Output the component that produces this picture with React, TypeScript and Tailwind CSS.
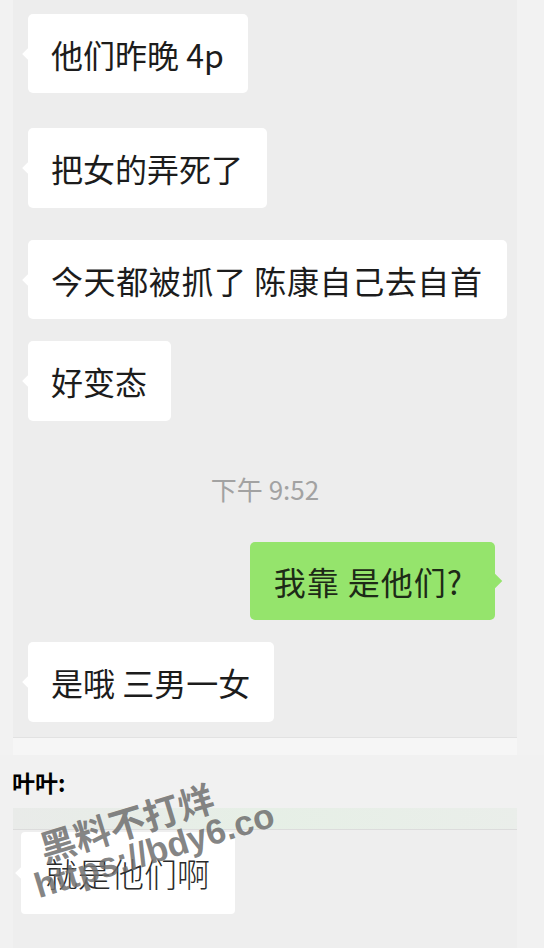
import React from 'react'

const cjk = { fontFamily: '"Noto Sans CJK SC", "Noto Sans", sans-serif' }

type BubbleProps = {
  text: string
  mt: string
  h?: string
  tr?: string
}

function LeftBubble({ text, mt, h = 'h-[79px]', tr = '' }: BubbleProps) {
  return (
    <div className={`flex pl-[15px] ${mt}`}>
      <div className={`relative flex items-center rounded-[5px] bg-white pl-[23px] pr-[24px] ${h}`}>
        {/* little tail */}
        <span className="absolute -left-[4px] top-1/2 h-[9px] w-[9px] -translate-y-1/2 rotate-45 bg-white" aria-hidden />
        <span className={`relative whitespace-pre text-[32px] leading-none text-[#1c1c1c] ${tr}`}>{text}</span>
      </div>
    </div>
  )
}

export default function App() {
  return (
    <div className="relative h-[948px] w-[544px] overflow-hidden bg-[#f2f2f2]" style={cjk}>
      {/* main chat column */}
      <div className="ml-[13px] w-[504px] bg-[#ededed] pt-[14px]">
        <LeftBubble text="他们昨晚 4p" mt="mt-0" />
        <LeftBubble text="把女的弄死了" mt="mt-[35px]" h="h-[80px]" />
        <LeftBubble text="今天都被抓了 陈康自己去自首" mt="mt-[32px]" tr="tracking-[0.6px]" />
        <LeftBubble text="好变态" mt="mt-[22px]" h="h-[80px]" />

        <div className="mt-[51px] flex h-[32px] items-center justify-center text-[26px] text-[#a2a2a2]">
          下午 9:52
        </div>

        {/* my message */}
        <div className="mt-[38px] flex justify-end pr-[22px]">
          <div className="relative flex h-[78px] items-center rounded-[5px] bg-[#95e46c] pl-[24px] pr-[32px]">
            <span className="absolute -right-[5px] top-1/2 h-[11px] w-[11px] -translate-y-1/2 rotate-45 bg-[#95e46c]" aria-hidden />
            <span className="relative whitespace-pre text-[32px] leading-none tracking-[1px] text-[#1d2a17]">我靠 是他们?</span>
          </div>
        </div>

        <LeftBubble text="是哦 三男一女" mt="mt-[22px]" h="h-[80px]" />
        <div className="h-[15px]" />
        <div className="h-px bg-[#e2e2e2]" />
        <div className="h-[17px] bg-[#f6f6f6]" />
      </div>

      {/* pasted second part */}
      <div className="bg-[#f1f1f1]">
        <div className="pl-[12px] pt-[15px] text-[23px] font-bold leading-[24px] text-black">叶叶:</div>
        <div className="ml-[13px] mt-[14px] h-[21px] w-[504px] bg-gradient-to-r from-[#e9ebe9] via-[#e6efe6] to-[#eaeeea]" />
        <div className="ml-[13px] h-px w-[504px] bg-[#dcdcdc]" />
        <div className="ml-[13px] w-[504px] bg-[#eeeeee] pt-[2px] pb-[40px]">
          <div className="relative ml-[8px] flex h-[82px] w-[214px] items-center rounded-[4px] bg-white pl-[24px]">
            <span className="absolute -left-[4px] top-1/2 h-[9px] w-[9px] -translate-y-1/2 rotate-45 bg-white" aria-hidden />
            <span className="relative text-[33px] font-light leading-none text-[#2a2a2a]">就是他们啊</span>
          </div>
        </div>
      </div>

      {/* watermark */}
      <div
        className="pointer-events-none absolute left-[126px] top-[821px] -translate-x-1/2 -translate-y-1/2 -rotate-[17deg] whitespace-nowrap text-[36px] font-bold leading-none text-[#6f6f6f]/85"
        aria-hidden
      >
        黑料不打烊
      </div>
      <div
        className="pointer-events-none absolute left-[154px] top-[850px] -translate-x-1/2 -translate-y-1/2 -rotate-[17deg] whitespace-nowrap text-[35px] font-bold leading-none text-[#6f6f6f]/85"
        style={{ fontFamily: '"Liberation Sans", Arial, sans-serif' }}
        aria-hidden
      >
        https://bdy6.co
      </div>
    </div>
  )
}
